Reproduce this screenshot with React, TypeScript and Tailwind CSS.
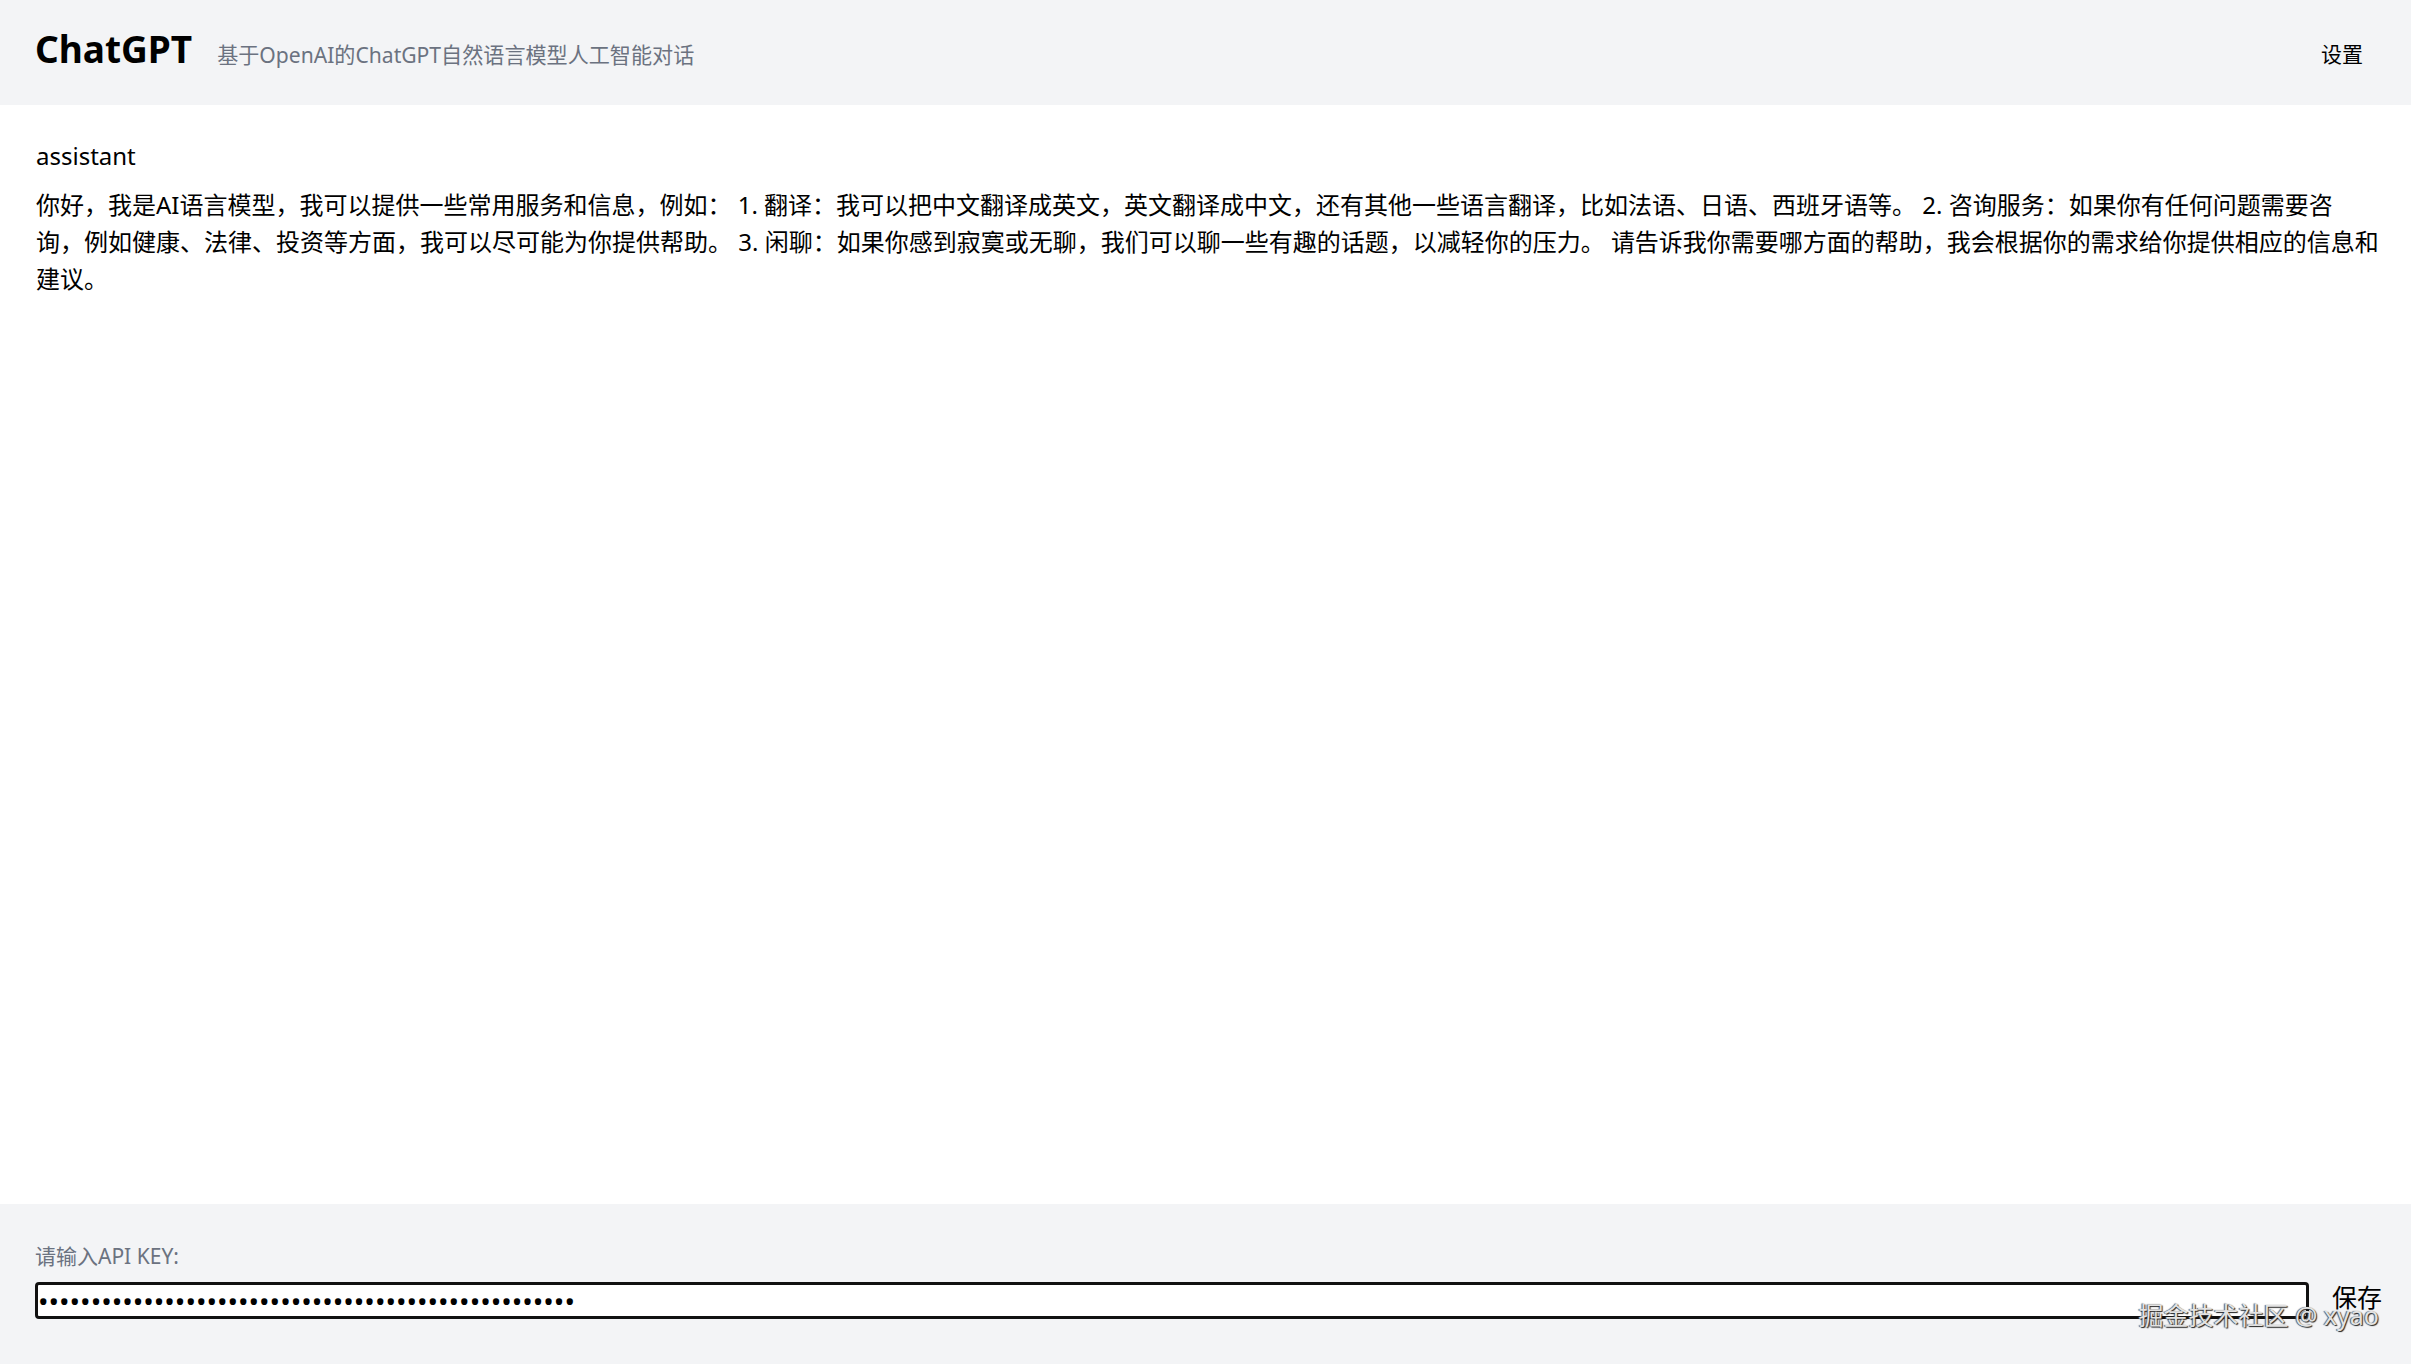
import { useState } from 'react';

const font = { fontFamily: '"Noto Sans", "Noto Sans CJK SC", sans-serif' };

const reply =
  '你好，我是AI语言模型，我可以提供一些常用服务和信息，例如： 1. 翻译：我可以把中文翻译成英文，英文翻译成中文，还有其他一些语言翻译，比如法语、日语、西班牙语等。 2. 咨询服务：如果你有任何问题需要咨询，例如健康、法律、投资等方面，我可以尽可能为你提供帮助。 3. 闲聊：如果你感到寂寞或无聊，我们可以聊一些有趣的话题，以减轻你的压力。 请告诉我你需要哪方面的帮助，我会根据你的需求给你提供相应的信息和建议。';

export default function App() {
  const [apiKey, setApiKey] = useState('sk-xxxxxxxxxxxxxxxxxxxxxxxxxxxxxxxxxxxxxxxxxxxxxxxx');

  return (
    <div
      className="h-screen flex flex-col bg-white text-black font-['Noto_Sans','Noto_Sans_CJK_SC',sans-serif]"
      style={font}
    >
      <header className="h-[105px] shrink-0 bg-[#f3f4f6] flex items-center justify-between pl-[35px] pr-[48px]">
        <div className="flex items-baseline gap-[25px] mb-[5px]">
          <h1 className="text-[37px] font-bold leading-none">ChatGPT</h1>
          <span className="text-[21.1px] text-[#6b7280]">基于OpenAI的ChatGPT自然语言模型人工智能对话</span>
        </div>
        <button className="text-[21px] pt-[4px]">设置</button>
      </header>

      <main className="flex-1 min-h-0 overflow-auto pl-[36px] pr-[31.5px] pt-[33px]">
        <div className="text-[24px] leading-[36px] mb-[12px]">assistant</div>
        <p className="text-[24px] leading-[37px]">{reply}</p>
      </main>

      <footer className="relative h-[160px] shrink-0 bg-[#f3f4f6] pl-[35px] pr-[29px] pt-[36px]">
        <label className="block text-[21px] leading-[32px] text-[#6b7280]">请输入API KEY:</label>
        <div className="mt-[10px] flex items-center gap-[23px]">
          <input
            type="password"
            value={apiKey}
            onChange={(e) => setApiKey(e.target.value)}
            className="flex-1 h-[37px] bg-white border-[3px] border-[#111] rounded-[4px] px-0 text-[28px] leading-none outline-none"
          />
          <button className="text-[25px] leading-none pb-[6px]">保存</button>
        </div>
        <div className="absolute right-[32px] bottom-[30px] text-[25px] text-[#e2e2e2] [text-shadow:1px_1px_1px_#222,-1px_0_1px_#555] pointer-events-none">
          掘金技术社区 @ xyao
        </div>
      </footer>
    </div>
  );
}
